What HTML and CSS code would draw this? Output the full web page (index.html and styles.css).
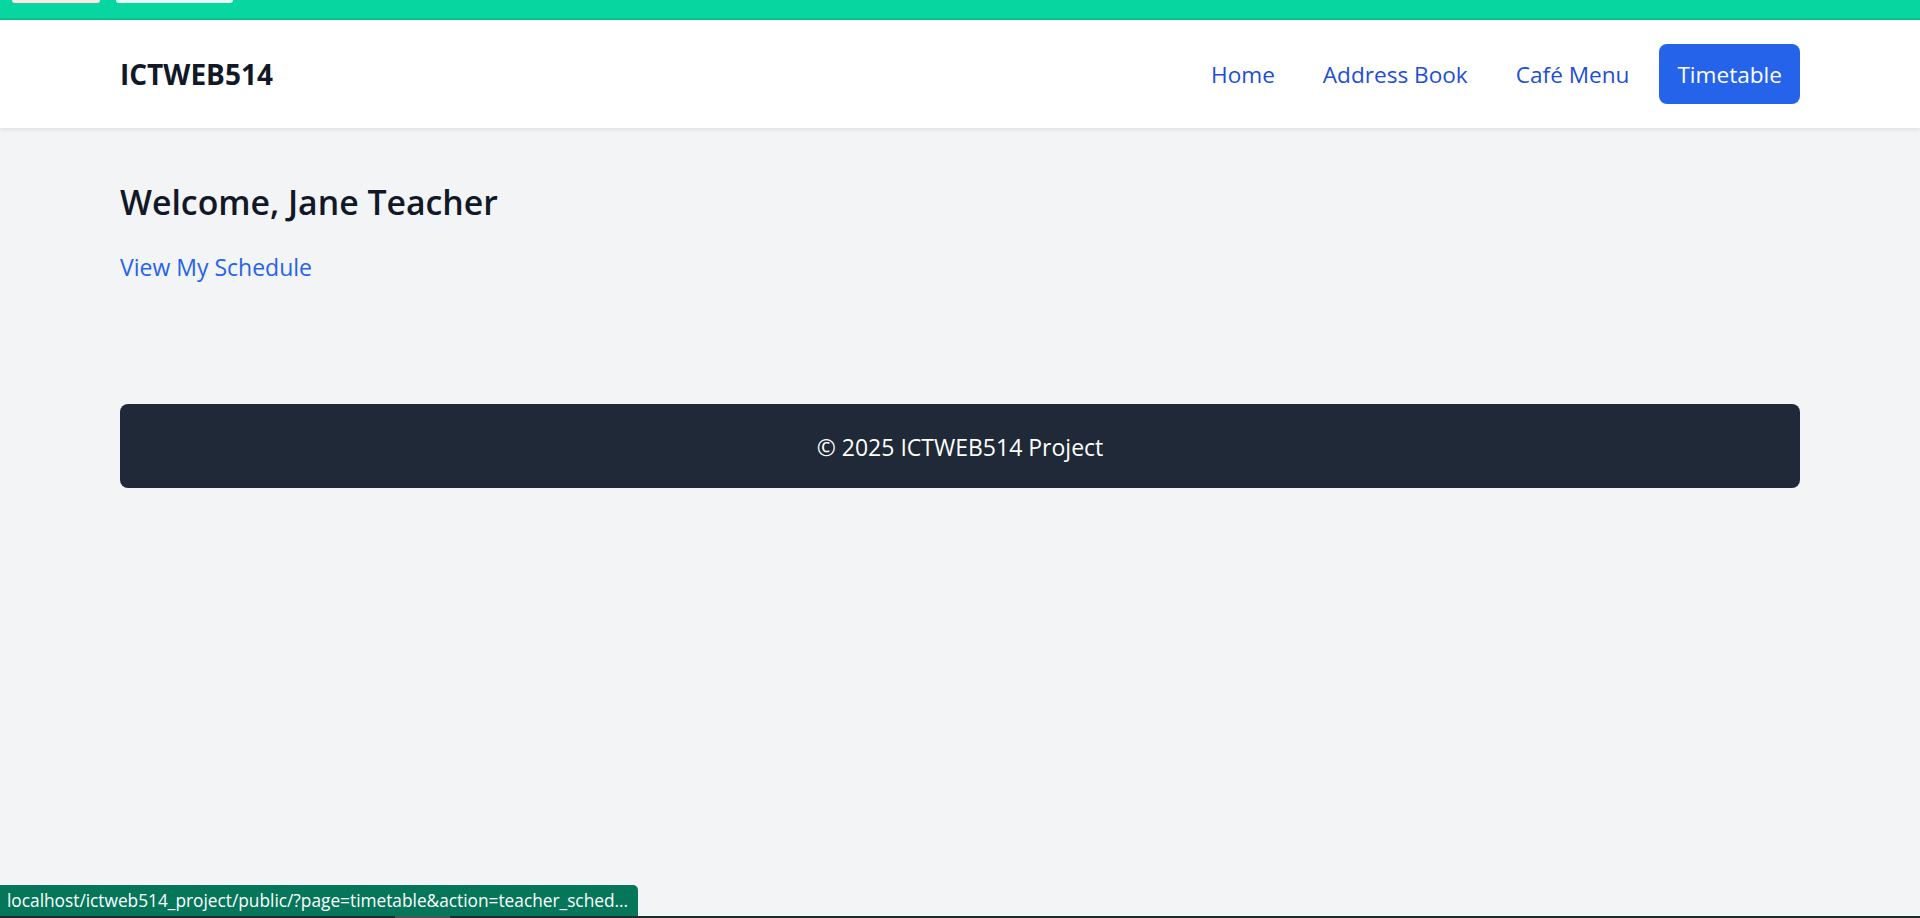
FILE: index.html
```html
<!DOCTYPE html>
<html lang="en">
<head>
<meta charset="utf-8">
<title>ICTWEB514</title>
<link rel="stylesheet" href="styles.css">
</head>
<body>
<div class="topstrip">
  <span class="tab tab-pink"></span>
  <span class="tab tab-mint"></span>
</div>
<header class="site-header">
  <div class="container header-inner">
    <a class="brand" href="#">ICTWEB514</a>
    <nav class="nav">
      <a class="nav-link" href="#">Home</a>
      <a class="nav-link" href="#">Address Book</a>
      <a class="nav-link" href="#">Café Menu</a>
      <a class="nav-link active" href="#">Timetable</a>
    </nav>
  </div>
</header>
<main class="container main">
  <h1 class="welcome">Welcome, Jane Teacher</h1>
  <a class="schedule-link" href="#">View My Schedule</a>
</main>
<footer class="container">
  <div class="footer-box">© 2025 ICTWEB514 Project</div>
</footer>
<div class="statusbar">localhost/ictweb514_project/public/?page=timetable&amp;action=teacher_sched...</div>
<div class="taskedge"><span class="taskedge-mark"></span></div>
</body>
</html>
```
FILE: styles.css
```css
* { box-sizing: border-box; }
html, body { margin: 0; padding: 0; }
body {
  background: #f3f4f6;
  font-family: "Open Sans", "Noto Sans", sans-serif;
  color: #111827;
  min-height: 918px;
}
a { text-decoration: none; }

.topstrip {
  height: 20px;
  background: #07d6a0;
  border-bottom: 2px solid #05c291;
  display: flex;
  gap: 16px;
  padding-left: 12px;
}
.tab {
  display: block;
  height: 3px;
  border-radius: 0 0 6px 6px;
}
.tab-pink { width: 88px; background: #fde7e3; }
.tab-mint { width: 117px; background: #e9faf5; }

.container {
  width: 1680px;
  margin: 0 auto;
}

.site-header {
  background: #ffffff;
  box-shadow: 0 2px 4px rgba(0, 0, 0, 0.08);
  position: relative;
}
.header-inner {
  height: 108px;
  display: flex;
  align-items: center;
  justify-content: space-between;
}
.brand {
  font-size: 28px;
  font-weight: 700;
  color: #111827;
  letter-spacing: 0;
}
.nav {
  display: flex;
  align-items: center;
  gap: 12px;
}
.nav-link {
  font-size: 22.6px;
  line-height: 35px;
  padding: 12.5px 18px;
  color: #1d4ed8;
  border-radius: 8px;
}
.nav-link.active {
  background: #2563eb;
  color: #ffffff;
}

.main {
  padding-top: 52px;
}
.welcome {
  margin: 0;
  font-size: 33.8px;
  line-height: 45px;
  font-weight: 600;
  color: #111827;
}
.schedule-link {
  display: inline-block;
  margin-top: 25px;
  font-size: 23px;
  line-height: 35px;
  color: #2563eb;
}

footer.container {
  margin-top: 119px;
}
.footer-box {
  background: #1f2937;
  color: #ffffff;
  border-radius: 8px;
  padding: 26px 0 23px;
  font-size: 23px;
  line-height: 35px;
  text-align: center;
}

.statusbar {
  position: fixed;
  left: 0;
  bottom: 2px;
  width: 638px;
  height: 31px;
  background: #06765a;
  color: #ffffff;
  font-size: 17.3px;
  line-height: 31px;
  padding-left: 7px;
  border-top-right-radius: 5px;
  white-space: nowrap;
  overflow: hidden;
}
.taskedge {
  position: fixed;
  left: 0;
  right: 0;
  bottom: 0;
  height: 2px;
  background: #1c2b2b;
}
.taskedge-mark {
  position: absolute;
  left: 395px;
  width: 55px;
  top: 0;
  bottom: 0;
  background: #4a5553;
}
```
